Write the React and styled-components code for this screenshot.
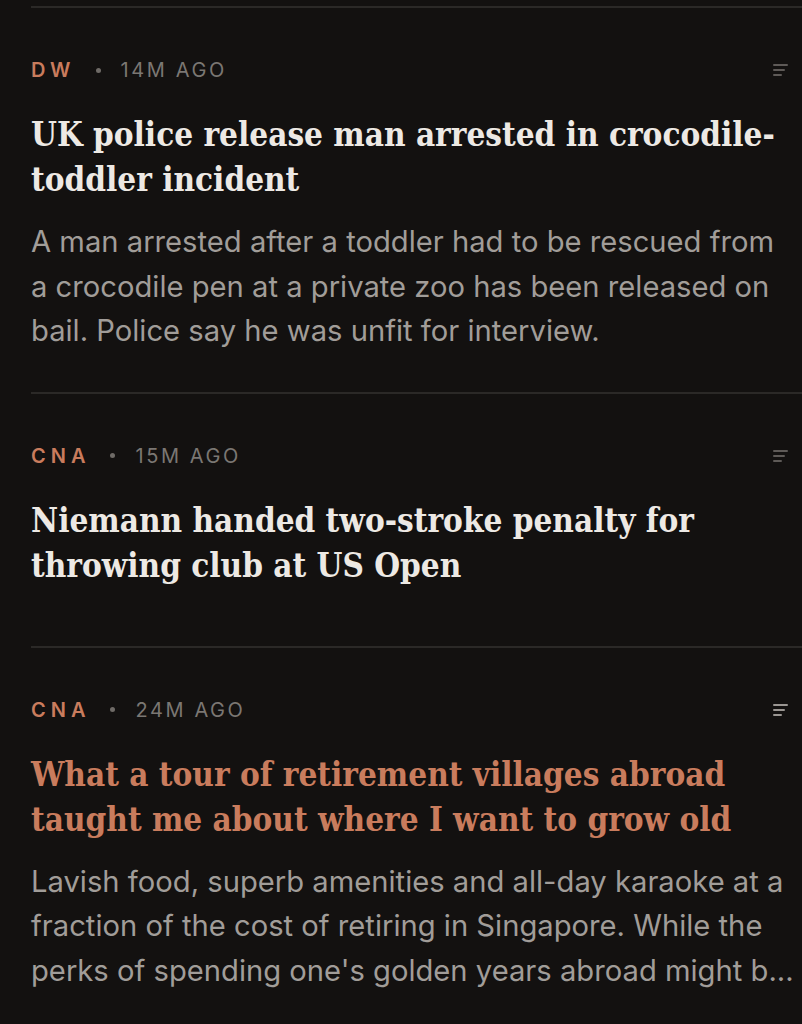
import styled, { createGlobalStyle } from "styled-components";

const GlobalStyle = createGlobalStyle`
  html, body {
    margin: 0;
    padding: 0;
    background: #131110;
  }
`;

const accent = "#c97c5d";

// summaries are stored as the feed shows them (already cut to three lines)
const stories = [
  {
    source: "DW",
    age: "14M AGO",
    title: "UK police release man arrested in crocodile-toddler incident",
    summary:
      "A man arrested after a toddler had to be rescued from a crocodile pen at a private zoo has been released on bail. Police say he was unfit for interview.",
  },
  {
    source: "CNA",
    age: "15M AGO",
    title: "Niemann handed two-stroke penalty for throwing club at US Open",
  },
  {
    source: "CNA",
    age: "24M AGO",
    title:
      "What a tour of retirement villages abroad taught me about where I want to grow old",
    summary:
      "Lavish food, superb amenities and all-day karaoke at a fraction of the cost of retiring in Singapore. While the perks of spending one's golden years abroad might b...",
    active: true,
  },
];

const Feed = styled.main`
  padding-top: 6px;
  background: #131110;
  min-height: 1024px;
`;

const Story = styled.article`
  margin-left: 31px;
  border-top: 2px solid #2b2927;
  padding: 50px 0 ${(p) => (p.$bare ? "58px" : "38px")};
`;

const Meta = styled.div`
  display: flex;
  align-items: center;
  padding-right: 13px;
  height: 24px;
  font-family: Inter, "Liberation Sans", sans-serif;
  font-size: 20px;
  letter-spacing: 2.6px;
`;

const Source = styled.span`
  color: ${accent};
  font-weight: 600;
  letter-spacing: 5px;
`;

const Dot = styled.span`
  width: 5px;
  height: 5px;
  border-radius: 50%;
  background: #6f6b67;
  margin: 0 20px 0 20px;
`;

const Age = styled.span`
  color: #7b7773;
  flex: 1;
`;

const Title = styled.h2`
  margin: 30px 0 0;
  font-family: "DejaVu Serif Condensed", "Liberation Serif", serif;
  font-weight: 700;
  font-size: 33px;
  line-height: 45px;
  color: ${(p) => (p.$active ? accent : "#ede9e4")};
`;

const Summary = styled.p`
  margin: 18px 0 0;
  padding-right: 4px;
  font-family: Inter, "Liberation Sans", sans-serif;
  font-size: 29.2px;
  line-height: 44.5px;
  color: #a19d99;
`;

function LinesIcon({ bright }) {
  const c = bright ? "#9a9692" : "#5e5a57";
  return (
    <svg width="16" height="14" viewBox="0 0 16 14">
      <rect x="0" y="1" width="15" height="2" rx="1" fill={c} />
      <rect x="0" y="6" width="12" height="2" rx="1" fill={c} />
      <rect x="0" y="11" width="9" height="2" rx="1" fill={c} />
    </svg>
  );
}

export default function App() {
  return (
    <Feed>
      <GlobalStyle />
      {stories.map((s, i) => (
        <Story key={i} $bare={!s.summary}>
          <Meta>
            <Source>{s.source}</Source>
            <Dot />
            <Age>{s.age}</Age>
            <LinesIcon bright={s.active} />
          </Meta>
          <Title $active={s.active}>{s.title}</Title>
          {s.summary ? <Summary>{s.summary}</Summary> : null}
        </Story>
      ))}
    </Feed>
  );
}
